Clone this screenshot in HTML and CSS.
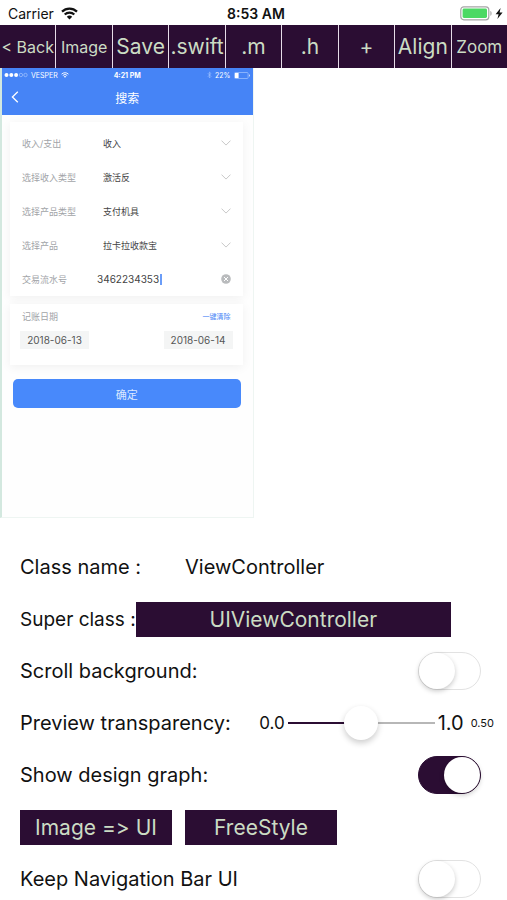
FILE: index.html
```html
<!DOCTYPE html>
<html lang="en">
<head>
    <meta charset="UTF-8">
    <meta name="viewport" content="width=device-width, initial-scale=1.0">
    <title>ViewController</title>
    <link rel="stylesheet" href="styles.css">
</head>
<body>
    <header class="status-bar">
        <div class="carrier">
            <span>Carrier</span>
            <svg class="wifi" viewBox="0 0 17 13" width="17" height="13">
                <path d="M1 4.6a10.8 10.8 0 0 1 15 0M3.7 7.5a7 7 0 0 1 9.6 0" fill="none" stroke="#111" stroke-width="2.2"/>
                <path d="M8.5 12.6L5.8 9.8a3.9 3.9 0 0 1 5.4 0z" fill="#111"/>
            </svg>
        </div>
        <span class="clock">8:53 AM</span>
        <div class="battery">
            <svg viewBox="0 0 44 15" width="44" height="15">
                <rect x=".8" y=".8" width="28" height="13" rx="3" fill="#fff" stroke="#a5a5a5" stroke-width="1.2"/>
                <rect x="2.6" y="2.6" width="24.4" height="9.4" rx="1.4" fill="#4cd964"/>
                <path d="M30.4 5c1.6.6 1.6 4.2 0 4.8z" fill="#a5a5a5"/>
                <path d="M40.6 2L35.6 8.2h3L37.4 13l5.2-6.6h-3z" fill="#111"/>
            </svg>
        </div>
    </header>

    <nav class="toolbar">
        <button class="tiny">&lt; Back</button>
        <button class="tiny">Image</button>
        <button>Save</button>
        <button>.swift</button>
        <button>.m</button>
        <button>.h</button>
        <button>+</button>
        <button>Align</button>
        <button class="small">Zoom</button>
    </nav>

    <section class="preview" lang="zh-CN">
        <div class="preview-header">
            <div class="preview-status">
                <span class="preview-carrier">
                    <svg viewBox="0 0 24 6" width="24" height="6">
                        <g fill="#fff"><circle cx="2.5" cy="3" r="2"/><circle cx="7.3" cy="3" r="2"/><circle cx="12.1" cy="3" r="2"/></g>
                        <g fill="none" stroke="#b5d0ff" stroke-width=".6"><circle cx="16.9" cy="3" r="1.7"/><circle cx="21.5" cy="3" r="1.7"/></g>
                    </svg>
                    VESPER
                    <svg viewBox="0 0 17 13" width="8" height="6">
                        <path d="M1 4.6a10.8 10.8 0 0 1 15 0M3.7 7.5a7 7 0 0 1 9.6 0" fill="none" stroke="#fff" stroke-width="2"/>
                        <path d="M8.5 12.6L5.8 9.8a3.9 3.9 0 0 1 5.4 0z" fill="#fff"/>
                    </svg>
                </span>
                <b>4:21 PM</b>
                <span class="preview-battery">
                    <svg viewBox="0 0 5 8" width="5" height="8"><path d="M.8 2.2l3.2 3.2L2.4 7V1L4 2.6.8 5.8" fill="none" stroke="#a5c6ff" stroke-width=".6"/></svg>
                    22%
                    <svg viewBox="0 0 17 7" width="17" height="7">
                        <rect x=".5" y=".5" width="13.6" height="6" rx="1" fill="none" stroke="#a5c6ff" stroke-width=".7"/>
                        <path d="M1 1h3.6v5H1z" fill="#fff"/>
                        <path d="M15.2 2.2c1 .4 1 2.2 0 2.6z" fill="#fff"/>
                    </svg>
                </span>
            </div>
            <div class="preview-nav">
                <button class="preview-back" aria-label="返回">
                    <svg viewBox="0 0 8 12" width="8" height="12"><path d="M6.8.8L1.4 6l5.4 5.2" fill="none" stroke="#fff" stroke-width="1.3"/></svg>
                </button>
                <span>搜索</span>
            </div>
        </div>

        <div class="card fields">
            <div class="field">
                <label for="kind">收入/支出</label>
                <select id="kind"><option>收入</option></select>
                <svg class="chevron" viewBox="0 0 10 6" width="10" height="6"><path d="M.5.6L5 5.1 9.5.6"/></svg>
            </div>
            <div class="field">
                <label for="incomeType">选择收入类型</label>
                <select id="incomeType"><option>激活反</option></select>
                <svg class="chevron" viewBox="0 0 10 6" width="10" height="6"><path d="M.5.6L5 5.1 9.5.6"/></svg>
            </div>
            <div class="field">
                <label for="productType">选择产品类型</label>
                <select id="productType"><option>支付机具</option></select>
                <svg class="chevron" viewBox="0 0 10 6" width="10" height="6"><path d="M.5.6L5 5.1 9.5.6"/></svg>
            </div>
            <div class="field">
                <label for="product">选择产品</label>
                <select id="product"><option>拉卡拉收款宝</option></select>
                <svg class="chevron" viewBox="0 0 10 6" width="10" height="6"><path d="M.5.6L5 5.1 9.5.6"/></svg>
            </div>
            <div class="field serial">
                <label for="serial">交易流水号</label>
                <div class="serial-value">
                    <input id="serial" type="text" value="3462234353">
                    <i class="caret"></i>
                </div>
                <button aria-label="清除">
                    <svg viewBox="0 0 10 10" width="10" height="10">
                        <circle cx="5" cy="5" r="4.8" fill="#b9bbbd"/>
                        <path d="M3 3l4 4M7 3L3 7" stroke="#fff" stroke-width="1"/>
                    </svg>
                </button>
            </div>
        </div>

        <div class="card dates">
            <div class="dates-head">
                <span>记账日期</span>
                <button class="clear">一键清除</button>
            </div>
            <div class="dates-row">
                <button>2018-06-13</button>
                <button>2018-06-14</button>
            </div>
        </div>

        <button class="confirm">确定</button>
    </section>

    <main class="settings">
        <div class="row">
            <label for="className">Class name :</label>
            <input class="class-name" id="className" type="text" value="ViewController">
        </div>
        <div class="row super-row">
            <span>Super class :</span>
            <button class="block super">UIViewController</button>
        </div>
        <div class="row">
            <label for="scroll">Scroll background:</label>
            <input class="switch" id="scroll" type="checkbox">
        </div>
        <div class="row">
            <label for="alpha">Preview transparency:</label>
            <div class="slider">
                <span class="min">0.0</span>
                <input id="alpha" type="range" min="0" max="1" step="0.01" value="0.5">
                <span class="max">1.0</span>
                <output for="alpha">0.50</output>
            </div>
        </div>
        <div class="row">
            <label for="graph">Show design graph:</label>
            <input class="switch" id="graph" type="checkbox" checked>
        </div>
        <div class="row modes">
            <button class="block">Image =&gt; UI</button>
            <button class="block">FreeStyle</button>
        </div>
        <div class="row">
            <label for="keepBar">Keep Navigation Bar UI</label>
            <input class="switch" id="keepBar" type="checkbox">
        </div>
    </main>
</body>
</html>
```
FILE: styles.css
```css
* {
    box-sizing: border-box;
}
body {
    display: flex;
    flex-direction: column;
    height: 100vh;
    margin: 0;
    overflow: hidden;
    font-family: Inter, "Noto Sans CJK SC", sans-serif;
    color: #111;
    background-color: #fff;
}
button, input, select {
    margin: 0;
    padding: 0;
    border: none;
    border-radius: 0;
    font-family: inherit;
    color: inherit;
    background: none;
}
button {
    cursor: pointer;
}
svg {
    display: block;
    flex: none;
}

/* Device status bar */
.status-bar {
    display: grid;
    grid-template-columns: 1fr auto 1fr;
    align-items: center;
    flex: none;
    height: 25px;
    padding: 2px 3px 0 8px;
    font-size: 14px;
}
.carrier {
    display: flex;
    align-items: center;
    gap: 7px;
}
.clock {
    font-weight: 600;
}
.battery {
    justify-self: end;
}

/* Toolbar */
.toolbar {
    display: grid;
    grid-template-columns: repeat(9, minmax(0, 1fr));
    gap: 1px;
    flex: none;
    height: 43px;
    background-color: #e6dce8;
}
.toolbar button {
    font-size: 21px;
    white-space: nowrap;
    color: #cbdcc4;
    background-color: #2b0d33;
}
.toolbar .small {
    font-size: 17px;
}
.toolbar .tiny {
    font-size: 16px;
}

/* Design preview, takes the left half */
.preview {
    flex: none;
    width: 50%;
    min-height: 450px;
    border: solid #eef5f2;
    border-width: 0 1px 1px 0;
    border-left: 2px solid #d3e8df;
    font-size: 9px;
    background-color: #fefefe;
}
.preview-header {
    height: 47px;
    color: #fff;
    background-color: #4684f6;
}
.preview-status {
    display: grid;
    grid-template-columns: 1fr auto 1fr;
    align-items: center;
    height: 14px;
    padding: 0 2px;
    font-size: 7px;
}
.preview-carrier,
.preview-battery {
    display: flex;
    align-items: center;
    gap: 3px;
}
.preview-battery {
    justify-content: flex-end;
}
.preview-nav {
    display: grid;
    grid-template-columns: 1fr auto 1fr;
    align-items: center;
    height: 30px;
    padding: 0 9px;
    font-size: 12px;
}
.card {
    margin: 8px 10px 0 8px;
    background-color: #fff;
    box-shadow: 0 2px 10px rgba(0, 0, 0, 0.06);
}
.fields {
    margin-top: 7px;
    padding-top: 4px;
}
.field {
    display: grid;
    grid-template-columns: 81px 1fr auto;
    align-items: center;
    height: 34px;
    padding: 0 12px;
}
.field label {
    color: #a2a4a8;
}
.field select {
    appearance: none;
    width: 100%;
    font-size: 9px;
    color: #444;
}
.chevron path {
    fill: none;
    stroke: #c8c8c8;
    stroke-width: 1;
}
.serial {
    grid-template-columns: 75px 1fr auto;
}
.serial-value {
    display: flex;
    align-items: center;
}
.serial input {
    width: 63px;
    font-size: 10px;
    color: #444;
}
.caret {
    width: 2px;
    height: 11px;
    background-color: #6b9df8;
}
.dates {
    height: 61px;
    padding: 4px 10px;
}
.dates-head,
.dates-row {
    display: flex;
    align-items: center;
    justify-content: space-between;
}
.dates-head {
    height: 16px;
    margin-bottom: 7px;
    padding: 0 2px;
    color: #a2a4a8;
}
.dates-head .clear {
    font-size: 7px;
    color: #4684f6;
}
.dates-row button {
    width: 69px;
    height: 18px;
    font-size: 10px;
    color: #555;
    background-color: #f4f5f5;
}
.confirm {
    display: block;
    width: calc(100% - 23px);
    height: 29px;
    margin: 14px 12px 0 11px;
    border-radius: 5px;
    font-size: 11px;
    color: #dce8ff;
    background-color: #4889fb;
}

/* Settings list */
.settings {
    flex: 1;
    min-height: 0;
    padding: 23px 13px 0 20px;
    font-size: 20px;
    font-variant-ligatures: no-contextual; /* keep "=>" as two characters */
}
.row {
    display: flex;
    align-items: center;
    justify-content: space-between;
    height: 52px;
    padding-right: 13px;
}
.class-name {
    width: 296px;
    font-size: 20px;
}
.super-row {
    justify-content: flex-start;
    padding-right: 43px;
    font-size: 19px;
}
.block {
    height: 35px;
    font-size: 21px;
    font-variant-ligatures: inherit;
    color: #cbdcc4;
    background-color: #2b0d33;
}
.super {
    flex: 1;
}
.modes {
    justify-content: flex-start;
    gap: 13px;
}
.modes .block {
    width: 152px;
}
.slider {
    display: flex;
    align-items: center;
    gap: 3px;
    margin-right: -13px;
}
.slider .min {
    font-size: 17px;
}
.slider output {
    margin-left: 4px;
    font-size: 11px;
}
.slider input {
    appearance: none;
    width: 147px;
    height: 36px;
}
.slider input::-webkit-slider-runnable-track {
    height: 2px;
    background: linear-gradient(to right, #2b0d33 50%, #b7b7b7 50%);
}
.slider input::-webkit-slider-thumb {
    appearance: none;
    width: 34px;
    height: 34px;
    margin-top: -16px;
    border-radius: 50%;
    background-color: #fff;
    box-shadow: 0 3px 6px rgba(0, 0, 0, 0.2);
}
.switch {
    appearance: none;
    display: flex;
    width: 63px;
    height: 38px;
    border: 1px solid #e2e2e2;
    border-radius: 19px;
    background-color: #fff;
}
.switch::before {
    content: "";
    width: 36px;
    height: 36px;
    border-radius: 50%;
    background-color: #fff;
    box-shadow: 0 2px 5px rgba(0, 0, 0, 0.22);
}
.switch:checked {
    justify-content: flex-end;
    border-color: #2b0d33;
    background-color: #2b0d33;
}
```
